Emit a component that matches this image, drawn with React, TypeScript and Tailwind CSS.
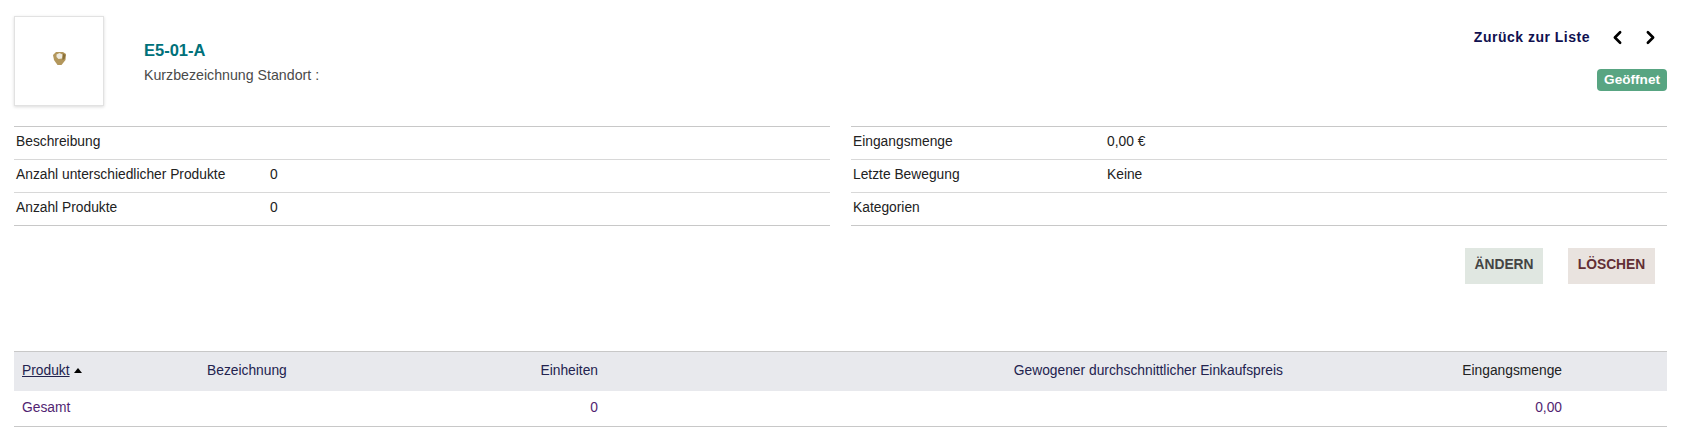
import { ChevronLeft, ChevronRight } from 'lucide-react';

const leftRows = [
  ['Beschreibung', ''],
  ['Anzahl unterschiedlicher Produkte', '0'],
  ['Anzahl Produkte', '0'],
];

const rightRows = [
  ['Eingangsmenge', '0,00 €'],
  ['Letzte Bewegung', 'Keine'],
  ['Kategorien', ''],
];

function InfoTable({ rows }: { rows: string[][] }) {
  return (
    <div className="flex-1 border-t border-[#c8c8c8]">
      {rows.map(([label, value]) => (
        <div
          key={label}
          className="flex h-[33px] items-center border-b border-[#d8d8d8] pb-[1px] pl-[2px] text-[13.8px] text-[#222] last:border-[#c8c8c8]"
        >
          <div className="w-[254px]">{label}</div>
          <div>{value}</div>
        </div>
      ))}
    </div>
  );
}

function Thumb() {
  return (
    <svg className="mb-[6px] blur-[0.4px]" width="15" height="15" viewBox="0 0 15 15">
      <path d="M1 4 L4 1 L11 1 L14 3 L13.5 9 L9.5 14 L5.5 14 L2 9 Z" fill="#b3975c" />
      <path d="M4.5 3.5 L7.5 2 L10.5 3.5 L10 7.5 L6.5 8 L4.5 6 Z" fill="#eeeade" />
      <path d="M11 2.5 L13.5 4 L12.5 8 L10.5 9 Z" fill="#8a7038" />
    </svg>
  );
}

export default function App() {
  return (
    <div className="h-[440px] w-[1689px] bg-white pl-[14px] pr-[22px] pt-[16px] font-['Liberation_Sans',Arial,sans-serif]">
      <div className="flex h-[110px] items-start justify-between">
        <div className="flex">
          <div className="flex size-[90px] items-center justify-center border border-[#e2e2e2] shadow-[0_1px_3px_rgba(0,0,0,0.15)]">
            <Thumb />
          </div>
          <div className="pl-[40px] pt-[24px]">
            <p className="text-[16.5px] leading-[20px] font-bold text-[#00717a]">E5-01-A</p>
            <p className="mt-[7px] text-[14.2px] leading-[16px] text-[#4a4a4a]">Kurzbezeichnung Standort :</p>
          </div>
        </div>

        <div className="flex flex-col items-end">
          <div className="mt-[11px] flex items-center pr-[6px]">
            <span className="text-[14px] font-bold tracking-[0.5px] text-[#10104f]">Zurück zur Liste</span>
            <ChevronLeft className="ml-[17px] size-[21px] text-black" strokeWidth={3} />
            <ChevronRight className="ml-[12px] size-[21px] text-black" strokeWidth={3} />
          </div>
          <span className="mt-[21px] rounded-[4px] bg-[#58a582] px-[7px] py-[2px] text-[13.6px] leading-[18px] font-bold text-white">
            Geöffnet
          </span>
        </div>
      </div>

      <div className="flex gap-[21px]">
        <InfoTable rows={leftRows} />
        <InfoTable rows={rightRows} />
      </div>

      <div className="mt-[22px] flex justify-end gap-[25px] pr-[12px]">
        <button className="h-[36px] w-[78px] bg-[#e0e7e1] pb-[2px] text-[13.8px] font-bold text-[#444]">ÄNDERN</button>
        <button className="h-[36px] w-[87px] bg-[#e9e3df] pb-[2px] text-[13.8px] font-bold text-[#632f35]">LÖSCHEN</button>
      </div>

      <div className="mt-[67px] border-t border-[#c8c8c8] text-[13.8px]">
        <div className="grid h-[39px] grid-cols-[193px_200px_191px_685px_279px] items-center bg-[#e8e9ed] pb-[1px] text-[#23234f]">
          <div className="flex items-center gap-[4px] pl-[8px]">
            <span className="underline">Produkt</span>
            <span className="mb-[1px] size-0 border-x-[4px] border-b-[5px] border-x-transparent border-b-black" />
          </div>
          <div>Bezeichnung</div>
          <div className="text-right">Einheiten</div>
          <div className="text-right">Gewogener durchschnittlicher Einkaufspreis</div>
          <div className="text-right text-[#222]">Eingangsmenge</div>
        </div>
        <div className="grid h-[36px] grid-cols-[193px_200px_191px_685px_279px] items-center border-b border-[#c8c8c8] pb-[1px] text-[#521f72]">
          <div className="pl-[8px]">Gesamt</div>
          <div />
          <div className="text-right">0</div>
          <div />
          <div className="text-right">0,00</div>
        </div>
      </div>
    </div>
  );
}
